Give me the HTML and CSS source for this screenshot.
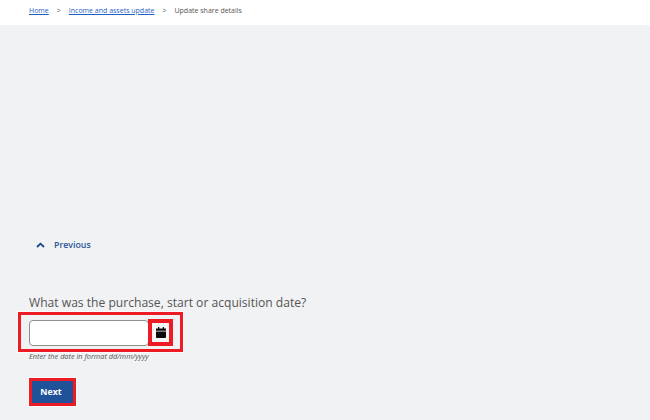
FILE: index.html
```html
<!DOCTYPE html>
<html lang="en">
<head>
<meta charset="utf-8">
<title>Update share details</title>
<link rel="stylesheet" href="styles.css">
</head>
<body>
<nav class="crumbs">
  <a href="#">Home</a><span class="sep">&gt;</span>
  <a href="#">Income and assets update</a><span class="sep">&gt;</span>
  <span class="current">Update share details</span>
</nav>
<main class="content">
  <a class="prev" href="#">
    <svg class="chev" width="9" height="6" viewBox="0 0 9 6"><path d="M1 5L4.5 1.7 8 5" fill="none" stroke="#1c4587" stroke-width="1.8"/></svg>
    <span>Previous</span>
  </a>
  <h2 class="question">What was the purchase, start or acquisition date?</h2>
  <div class="field-mark">
    <div class="input"></div>
    <div class="cal-mark">
      <svg width="10" height="11" viewBox="0 0 11 12"><path d="M2.2 0h1.4v1.6h3.8V0h1.4v1.6H11V4H0V1.6h2.2zM0 5h11v6a1 1 0 0 1-1 1H1a1 1 0 0 1-1-1z" fill="#0b0b0b"/></svg>
    </div>
  </div>
  <p class="hint">Enter the date in format dd/mm/yyyy</p>
  <div class="next-mark"><button class="next" type="button">Next</button></div>
</main>
</body>
</html>
```
FILE: styles.css
```css
html, body { margin: 0; height: 100%; }
body { width: 650px; height: 420px; overflow: hidden; background: #f1f2f4; font-family: "Open Sans", "Noto Sans", sans-serif; }
.crumbs { height: 25px; box-sizing: border-box; background: #fff; padding: 5px 0 0 29px; font-size: 7px; line-height: 12px; color: #555; display: flex; }
.crumbs a { color: #1f5fbf; text-decoration: underline; }
.sep { margin: 0 8px; }
.content { padding: 214px 0 0 29px; }
.prev { display: flex; align-items: center; gap: 9px; margin-left: 7px; height: 12px; color: #2a5596; font-size: 8.8px; font-weight: 600; text-decoration: none; }
.question { margin: 43px 0 0; font-size: 12.1px; line-height: 17px; font-weight: 400; color: #555; }
.field-mark { margin: 1px 0 0 -11px; width: 165px; height: 40px; box-sizing: border-box; border: 3px solid #ed1c24; box-shadow: 0 0 0 1px rgba(255,255,255,.7); display: flex; align-items: center; padding: 1px 0 0 8px; }
.input { width: 120px; height: 26px; box-sizing: border-box; background: #fff; border: 1.5px solid #8f8f8f; border-radius: 4px; }
.cal-mark { width: 25px; height: 27px; box-sizing: border-box; border: 4px solid #ed1c24; display: flex; align-items: center; justify-content: center; margin-left: -1px; background: #f6f6f7; }
.hint { margin: 0; font-size: 7.35px; line-height: 9px; font-style: italic; color: #555; }
.next-mark { margin-top: 17px; width: 47px; height: 28px; box-sizing: border-box; border: 3px solid #ed1c24; box-shadow: 0 0 0 1px rgba(255,255,255,.7); display: flex; }
.next { flex: 1; margin: 0; border: 0; padding: 0 3px 0 0; background: #1f5299; color: #fff; font: 700 8.8px "Open Sans", sans-serif; }
```
